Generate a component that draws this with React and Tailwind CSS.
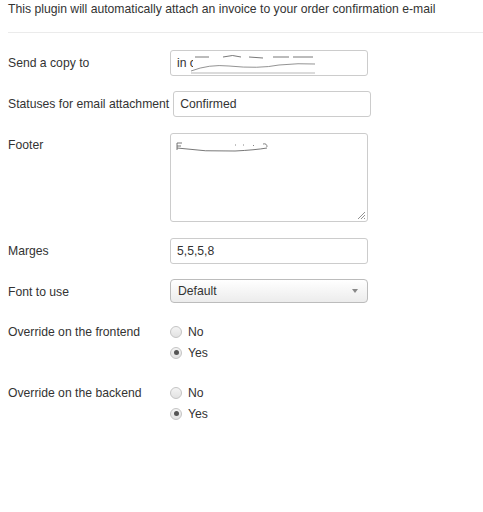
const font = { fontFamily: '"Liberation Sans", Arial, sans-serif' }

function Label({ children }) {
  return (
    <div className="min-w-[157px] mr-[4px] pt-[6px] leading-[14px] text-[12.2px] text-[#333] whitespace-nowrap">
      {children}
    </div>
  )
}

function TextBox({ children, className = '' }) {
  return (
    <div
      className={`relative w-[198px] h-[26px] border border-[#ccc] rounded-[3px] bg-white pl-[6px] flex items-center text-[12.2px] text-[#333] ${className}`}
    >
      {children}
    </div>
  )
}

function Radio({ checked, label }) {
  return (
    <div className="flex items-center h-[20.5px]">
      <span className="w-[12px] h-[12px] rounded-full border border-[#c4c4c4] bg-gradient-to-b from-[#f4f4f4] to-[#e2e2e2] flex items-center justify-center">
        {checked && <span className="w-[5px] h-[5px] rounded-full bg-[#555]" />}
      </span>
      <span className="ml-[6px] text-[12.2px] text-[#333]">{label}</span>
    </div>
  )
}

function RadioRow({ label, className = '' }) {
  return (
    <div className={`flex items-start ${className}`}>
      <div className="min-w-[157px] mr-[5px] pt-[3px] leading-[14px] text-[12.2px] text-[#333]">{label}</div>
      <div>
        <Radio label="No" />
        <Radio checked label="Yes" />
      </div>
    </div>
  )
}

export default function App() {
  return (
    <div className="w-[483px] h-[512px] bg-white overflow-hidden" style={font}>
      <p className="px-[8px] pt-[2px] leading-[14px] text-[12.2px] text-[#333]">
        This plugin will automatically attach an invoice to your order confirmation e-mail
      </p>
      <div className="ml-[8px] mt-[16px] h-px bg-[#ebebeb]" />

      <div className="px-[8px]">
        <div className="flex items-start mt-[17px]">
          <div className="min-w-[162px] pt-[6px] leading-[14px] text-[12.2px] text-[#333]">Send a copy to</div>
          <TextBox>
            <span>in c</span>
            <svg className="absolute left-[18px] top-[3px]" width="130" height="20" viewBox="0 0 130 20">
              <rect x="4" y="1" width="120" height="17" fill="#fff" />
              <path d="M6 3 L20 3 M34 3 Q44 0 52 3 M60 3 L74 4 M84 3 L100 3 M104 3 L124 3" stroke="#555" strokeWidth="0.8" fill="none" />
              <path d="M2 17 Q20 10 40 12 Q70 15 90 11 Q110 9 126 10" stroke="#777" strokeWidth="0.8" fill="none" />
              <path d="M2 19 L126 19" stroke="#888" strokeWidth="0.6" />
            </svg>
          </TextBox>
        </div>

        <div className="flex items-start mt-[15px]">
          <Label>Statuses for email attachment</Label>
          <TextBox>Confirmed</TextBox>
        </div>

        <div className="flex items-start mt-[16px]">
          <div className="min-w-[162px] pt-[5px] leading-[14px] text-[12.2px] text-[#333]">Footer</div>
          <div className="relative w-[198px] h-[89px] border border-[#ccc] rounded-[3px] bg-white">
            <svg className="absolute left-[4px] top-[6px]" width="100" height="14" viewBox="0 0 100 14">
              <path d="M2 3 L2 10 M2 3 L7 3 M2 6 L6 6" stroke="#555" strokeWidth="0.8" fill="none" />
              <path d="M2 8 Q30 12 60 11 Q80 10 92 8" stroke="#555" strokeWidth="0.8" fill="none" />
              <path d="M60 5 L61 5 M68 5 L69 5 M78 5 L79 6 M88 4 Q92 3 92 7" stroke="#666" strokeWidth="0.8" fill="none" />
            </svg>
            <svg className="absolute right-[1px] bottom-[1px]" width="9" height="9" viewBox="0 0 9 9">
              <path d="M8 1 L1 8 M8 4 L4 8 M8 7 L7 8" stroke="#777" strokeWidth="0.8" />
            </svg>
          </div>
        </div>

        <div className="flex items-start mt-[16px]">
          <div className="min-w-[162px] pt-[6px] leading-[14px] text-[12.2px] text-[#333]">Marges</div>
          <TextBox>5,5,5,8</TextBox>
        </div>

        <div className="flex items-start mt-[15px]">
          <div className="min-w-[162px] pt-[6px] leading-[14px] text-[12.2px] text-[#333]">Font to use</div>
          <div className="w-[198px] h-[24px] border border-[#bcbcbc] rounded-[4px] bg-gradient-to-b from-white to-[#ececec] pl-[7px] pr-[9px] flex items-center justify-between text-[12.2px] text-[#333]">
            <span>Default</span>
            <span className="w-0 h-0 border-l-[3px] border-r-[3px] border-t-[4px] border-l-transparent border-r-transparent border-t-[#888]" />
          </div>
        </div>

        <RadioRow label="Override on the frontend" className="mt-[19px]" />
        <RadioRow label="Override on the backend" className="mt-[20px]" />
      </div>
    </div>
  )
}
